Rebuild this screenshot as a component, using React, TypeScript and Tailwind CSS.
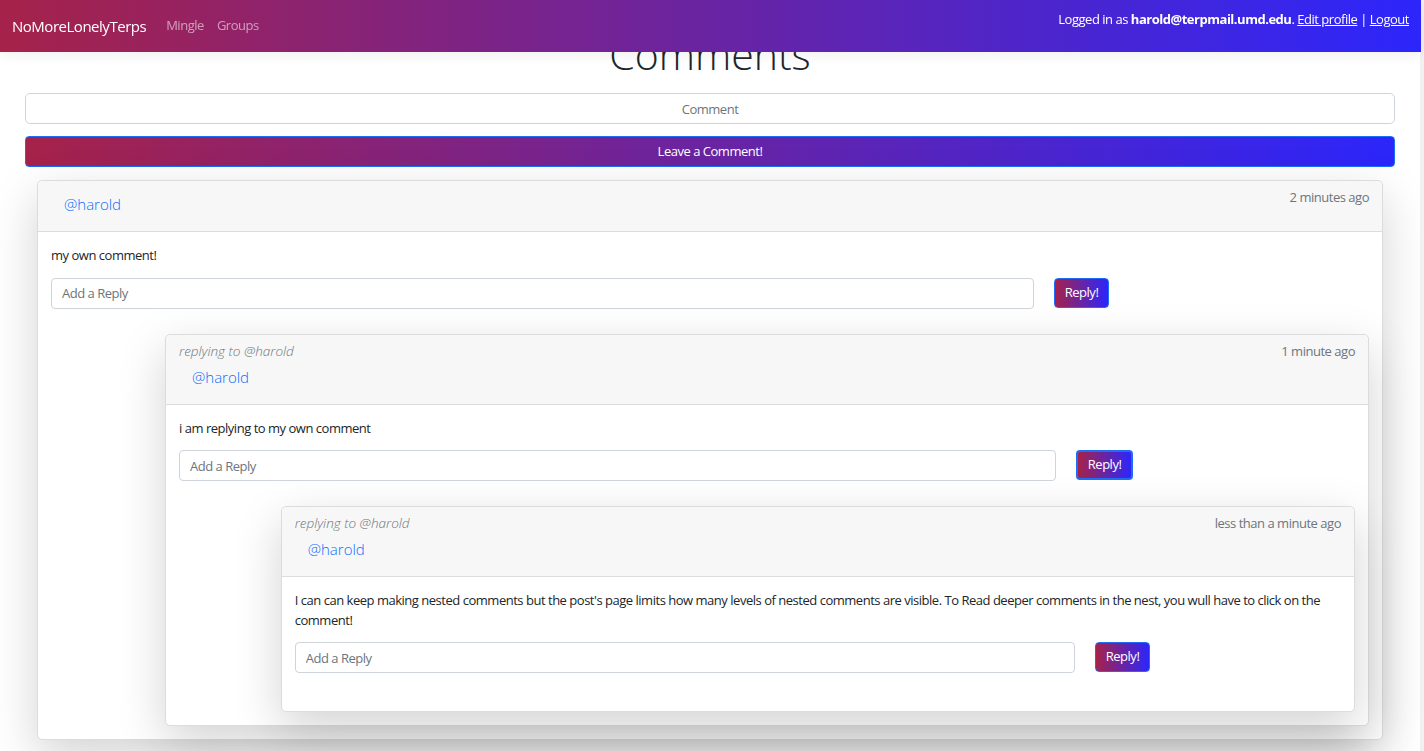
import React from 'react';

interface CommentData {
  user: string;
  time: string;
  text: string;
  replyingTo?: string;
  focused?: boolean;
  reply?: CommentData;
}

const thread: CommentData = {
  user: '@harold',
  time: '2 minutes ago',
  text: 'my own comment!',
  reply: {
    user: '@harold',
    time: '1 minute ago',
    text: 'i am replying to my own comment',
    replyingTo: '@harold',
    focused: true,
    reply: {
      user: '@harold',
      time: 'less than a minute ago',
      text: "I can can keep making nested comments but the post's page limits how many levels of nested comments are visible. To Read deeper comments in the nest, you wull have to click on the comment!",
      replyingTo: '@harold',
    },
  },
};

const gradient = 'bg-[linear-gradient(to_right,#a6224a,#2c26fb)]';

function CommentCard({ c }: { c: CommentData }) {
  return (
    <div className="rounded-[5px] border border-[#dcdcdc] bg-white shadow-[0_16px_48px_rgba(0,0,0,0.175)]">
      <div className="flex justify-between rounded-t-[5px] border-b border-[#dcdcdc] bg-[#f7f7f7] px-[13px] py-[6px]">
        <div>
          {c.replyingTo && (
            <div className="pt-[1px] text-[13.5px] leading-[18px] font-light tracking-normal italic text-[#6c757d]">
              replying to {c.replyingTo}
            </div>
          )}
          <a className="inline-block px-[13px] pt-[5px] pb-[9px] text-[15px] leading-[24px] font-light tracking-normal text-[#0d6efd]">
            {c.user}
          </a>
        </div>
        <div className="text-[13px] leading-[20px] text-[#6c757d]">{c.time}</div>
      </div>
      <div className="p-[13px]">
        <p className="mb-[12px] pt-[1px] text-[13px] leading-[19.5px] text-[#212529]">{c.text}</p>
        <div className="mb-[25px] flex items-start gap-[20px]">
          <input
            placeholder="Add a Reply"
            className="h-[31px] w-[74.6%] rounded-[4px] border border-[#ced4da] bg-white px-[10px] text-[13px] text-[#212529] placeholder:text-[#6c757d] outline-none"
          />
          <button
            className={
              'h-[30px] rounded-[4px] px-[9.5px] text-[13px] text-white ' +
              gradient +
              (c.focused ? ' border-2 border-[#1f6cf5]' : ' border border-[#1f6cf5]')
            }
          >
            Reply!
          </button>
        </div>
        {c.reply && (
          <div className="ml-[8.65%]">
            <CommentCard c={c.reply} />
          </div>
        )}
      </div>
    </div>
  );
}

export default function App() {
  return (
    <div className="flex min-h-screen bg-white font-['Open_Sans',sans-serif] tracking-[-0.03em]">
      <nav
        className={
          'fixed top-0 right-[3px] left-0 z-10 flex h-[52px] justify-between pr-[12px] pl-[12px] shadow-[0_4px_12px_rgba(0,0,0,0.06)] ' +
          gradient
        }
      >
        <div className="flex items-center">
          <span className="text-[15px] text-white">NoMoreLonelyTerps</span>
          <span className="ml-[20px] text-[13px] text-white/55">Mingle</span>
          <span className="ml-[13px] text-[13px] text-white/55">Groups</span>
        </div>
        <div className="pt-[9px] text-[13px] leading-[20px] text-white">
          Logged in as <b>harold@terpmail.umd.edu</b>. <a className="underline">Edit profile</a> |{' '}
          <a className="underline">Logout</a>
        </div>
      </nav>

      <main className="flex-1 px-[25px] pt-[28px] pb-[12px]">
        <h1 className="mb-[13px] text-center text-[41px] leading-[52px] font-light tracking-normal text-[#212529]">
          Comments
        </h1>
        <input
          placeholder="Comment"
          className="mb-[12px] block h-[31px] w-full rounded-[5px] border border-[#ced4da] bg-white text-center text-[13px] placeholder:text-[#6c757d] outline-none"
        />
        <button
          className={
            'block h-[31px] w-full rounded-[4px] border border-[#1f6cf5] text-[13px] text-white ' + gradient
          }
        >
          Leave a Comment!
        </button>
        <div className="mx-[12px] mt-[13px]">
          <CommentCard c={thread} />
        </div>
      </main>
      <div className="w-[4px] shrink-0 bg-[#f1f1f1]" />
    </div>
  );
}
